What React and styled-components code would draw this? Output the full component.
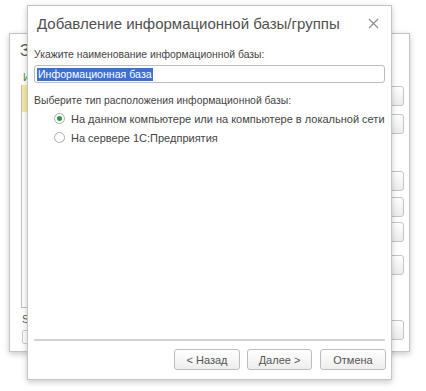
import React from 'react';
import styled, { createGlobalStyle } from 'styled-components';

const GlobalStyle = createGlobalStyle`
  html, body {
    margin: 0;
    padding: 0;
    background: #ffffff;
  }
  body {
    font-family: 'Liberation Sans', Arial, sans-serif;
    color: #4a4a4a;
  }
`;

const Desktop = styled.div`
  position: relative;
  width: 426px;
  height: 391px;
  overflow: hidden;
  background: #ffffff;
`;

const Window = styled.div`
  position: absolute;
  left: ${({ left }) => left}px;
  top: ${({ top }) => top}px;
  width: ${({ w }) => w}px;
  height: ${({ h }) => h}px;
  box-sizing: border-box;
  background: #ffffff;
  border: 1px solid #c4c4c4;
  box-shadow: 0 2px 6px rgba(0, 0, 0, 0.22);
  display: flex;
  flex-direction: column;
`;

/* background window, mostly hidden behind the dialog */

const BackTitle = styled.div`
  width: 16px;
  overflow: hidden;
  font-size: 16px;
  color: #555;
  padding: 8px 0 0 10px;
  height: 29px;
  white-space: nowrap;
`;

const GreenLabel = styled.div`
  width: 12px;
  overflow: hidden;
  font-size: 10.5px;
  color: #3a9a3a;
  padding: 0 0 0 13px;
  height: 14px;
  white-space: nowrap;
`;

const BackBody = styled.div`
  display: flex;
  gap: 6px;
  padding: 0 5px 0 11px;
  height: 223px;
`;

const List = styled.div`
  flex: 1;
  border: 1px solid #bdbdbd;
  border-top: none;
  display: flex;
  flex-direction: column;
`;

const ListRow = styled.div`
  height: 27px;
  background: ${({ active }) => (active ? '#fbeaa3' : 'transparent')};
`;

const SideButtons = styled.div`
  width: 80px;
  display: flex;
  flex-direction: column;
`;

const SideButton = styled.div`
  height: 20px;
  margin-top: ${({ gap }) => gap}px;
  box-sizing: border-box;
  border: 1px solid #c4c4c4;
  border-radius: 3px;
  background: linear-gradient(#ffffff, #ececec);
`;

const BackFooter = styled.div`
  display: flex;
  gap: 6px;
  padding: 5px 5px 0 12px;
`;

const BackFooterLeft = styled.div`
  flex: 1;
  display: flex;
  flex-direction: column;
  gap: 5px;
`;

const SmallLabel = styled.div`
  width: 12px;
  overflow: hidden;
  font-size: 11px;
  color: #6b5f50;
  height: 12px;
`;

const SmallInput = styled.div`
  height: 12px;
  border: 1px solid #cccccc;
  border-radius: 2px;
`;

/* front dialog */

const Header = styled.div`
  height: 34px;
  display: flex;
  align-items: center;
  justify-content: space-between;
  padding: 0 9px 0 9px;
`;

const Title = styled.div`
  font-size: 15px;
  color: #505050;
  white-space: nowrap;
`;

const Close = styled.div`
  width: 18px;
  display: flex;
  justify-content: center;
`;

const Content = styled.div`
  flex: 1;
  padding: 8px 6px 0 6px;
  display: flex;
  flex-direction: column;
`;

const Label = styled.div`
  font-size: 10.4px;
  line-height: 14px;
  color: #444;
  white-space: nowrap;
  margin-bottom: ${({ mb }) => mb || 0}px;
`;

const Input = styled.div`
  height: 18px;
  box-sizing: border-box;
  border: 1px solid #bcbcbc;
  border-radius: 3px;
  display: flex;
  align-items: center;
  padding-left: 2px;
  margin-bottom: 11px;
`;

const Selected = styled.span`
  font-size: 10.6px;
  line-height: 13px;
  background: #3b6fd3;
  color: #ffffff;
  padding: 0 1px;
`;

const RadioRow = styled.div`
  display: flex;
  align-items: center;
  gap: 6px;
  height: 19px;
  padding-left: 20px;
  font-size: 11px;
  color: #444;
  white-space: nowrap;
`;

const RadioCircle = styled.span`
  flex: none;
  width: 11px;
  height: 11px;
  box-sizing: border-box;
  border: 1px solid #ababab;
  border-radius: 50%;
  background: #fff;
  display: flex;
  align-items: center;
  justify-content: center;
  &::after {
    content: '';
    display: ${({ checked }) => (checked ? 'block' : 'none')};
    width: 5px;
    height: 5px;
    border-radius: 50%;
    background: #2f9a43;
  }
`;

const Separator = styled.div`
  height: 2px;
  margin: 0 6px;
  background: #d2d2d2;
`;

const Footer = styled.div`
  display: flex;
  justify-content: flex-end;
  gap: 7px;
  padding: 8px 5px 9px 0;
`;

const Button = styled.button`
  height: 21px;
  width: ${({ w }) => w}px;
  padding: 0;
  margin: 0 0 0 ${({ ml }) => ml || 0}px;
  border: 1px solid #bdbdbd;
  border-radius: 3px;
  background: linear-gradient(#ffffff, #eeeeee);
  font-family: 'Liberation Sans', Arial, sans-serif;
  font-size: 11px;
  color: #555;
  cursor: pointer;
`;

const CloseIcon = () => (
  <svg width="11" height="11" viewBox="0 0 11 11">
    <path d="M1 1 L10 10 M10 1 L1 10" stroke="#8c8c8c" strokeWidth="1.2" fill="none" />
  </svg>
);

export default function App() {
  return (
    <>
      <GlobalStyle />
      <Desktop>
        <Window left={9} top={33} w={401} h={319}>
          <BackTitle>З</BackTitle>
          <GreenLabel>И</GreenLabel>
          <BackBody>
            <List>
              <ListRow active />
            </List>
            <SideButtons>
              <SideButton gap={1} />
              <SideButton gap={8} />
              <SideButton gap={37} />
              <SideButton gap={6} />
              <SideButton gap={5} />
              <SideButton gap={13} />
            </SideButtons>
          </BackBody>
          <BackFooter>
            <BackFooterLeft>
              <SmallLabel>S</SmallLabel>
              <SmallInput />
            </BackFooterLeft>
            <SideButtons>
              <SideButton gap={7} />
            </SideButtons>
          </BackFooter>
        </Window>

        <Window left={27} top={5} w={365} h={375}>
          <Header>
            <Title>Добавление информационной базы/группы</Title>
            <Close>
              <CloseIcon />
            </Close>
          </Header>
          <Content>
            <Label mb={3}>Укажите наименование информационной базы:</Label>
            <Input>
              <Selected>Информационная база</Selected>
            </Input>
            <Label mb={1}>Выберите тип расположения информационной базы:</Label>
            <RadioRow>
              <RadioCircle checked />
              На данном компьютере или на компьютере в локальной сети
            </RadioRow>
            <RadioRow>
              <RadioCircle />
              На сервере 1С:Предприятия
            </RadioRow>
          </Content>
          <Separator />
          <Footer>
            <Button w={66}>&lt; Назад</Button>
            <Button w={65}>Далее &gt;</Button>
            <Button w={66} ml={1}>Отмена</Button>
          </Footer>
        </Window>
      </Desktop>
    </>
  );
}
